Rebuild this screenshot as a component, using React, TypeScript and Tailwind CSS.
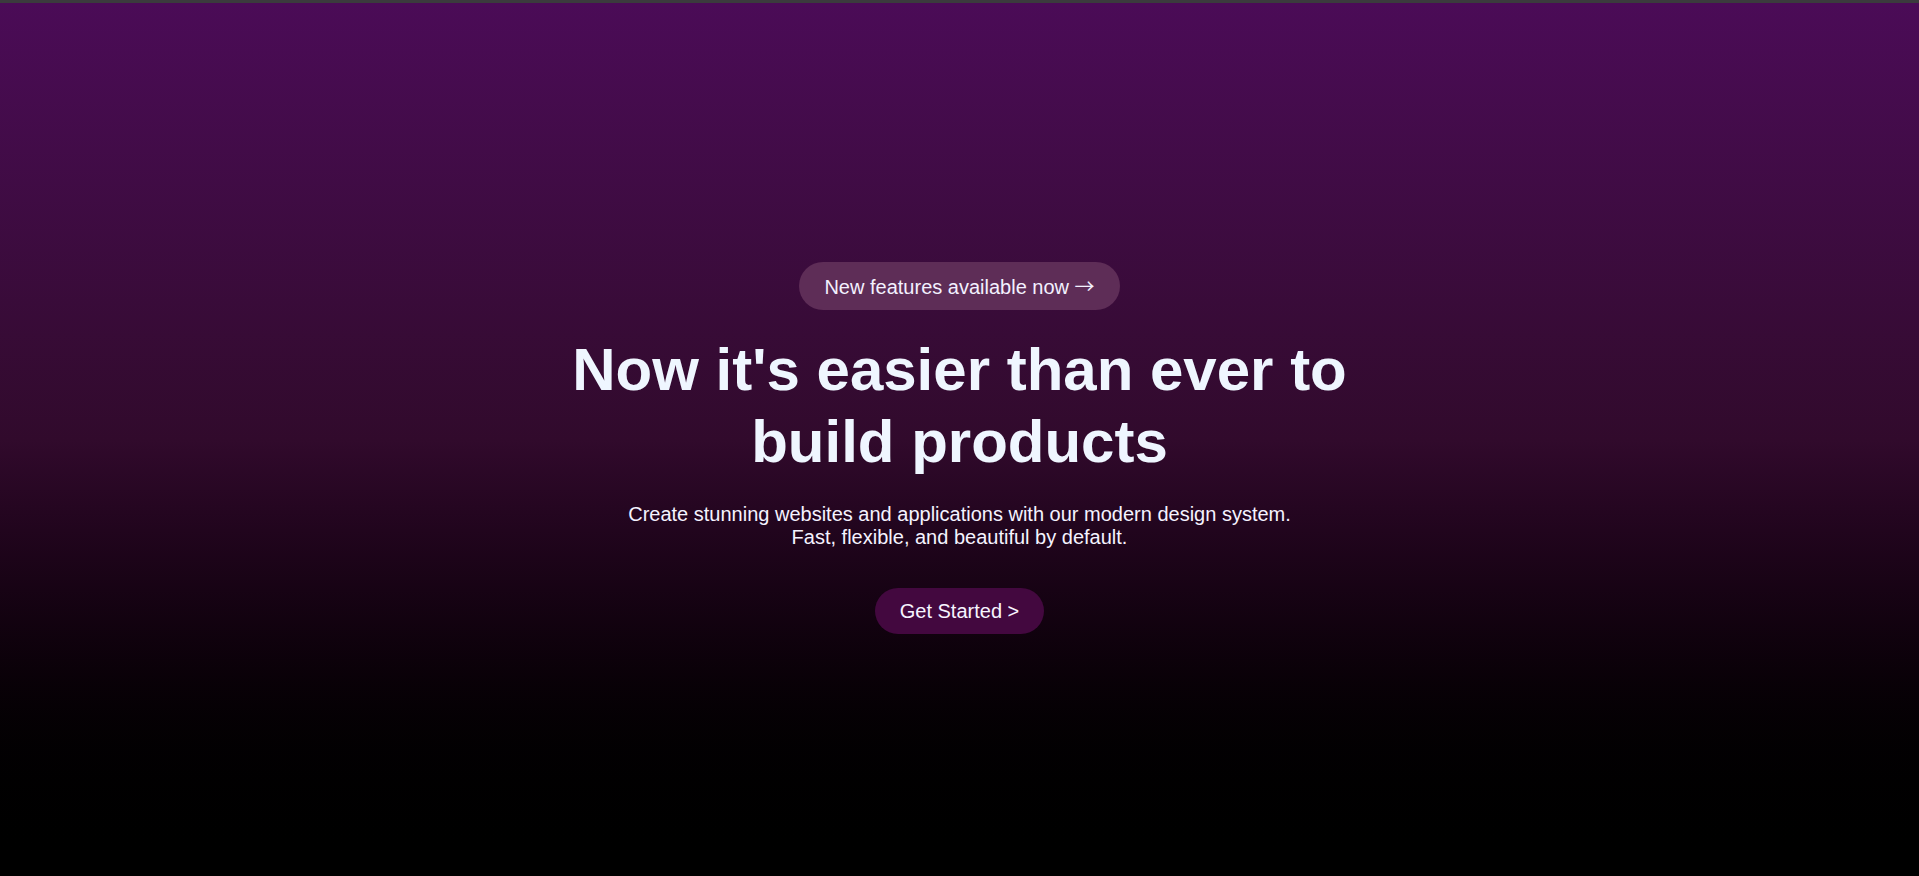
import React from 'react';

const App: React.FC = () => {
  return (
    <div className="min-h-screen w-full bg-black font-['Liberation_Sans',Arial,sans-serif]">
      {/* browser-ish top strip */}
      <div className="h-[3px] w-full bg-[#3b3b3d]"></div>

      <main className="h-[873px] w-full bg-linear-to-b from-[#4b0b57] via-[#310a2c] to-black flex flex-col items-center pt-[259px] text-center">
        <a
          href="#"
          className="h-12 px-[25px] flex items-center rounded-full bg-[#5e2d57] text-[20px] leading-[23px] text-[#f3f1ff] mb-6"
        >
          <span>
            New features available now{' '}
            <span className="font-['Noto_Sans_CJK_SC','DejaVu_Sans',sans-serif] leading-[23px]">→</span>
          </span>
        </a>

        <h1 className="max-w-4xl text-[60px] leading-[72px] font-bold text-[#eff6ff] mb-[25px]">
          Now it's easier than ever to build products
        </h1>

        <p className="text-[20px] leading-[23px] text-[#f5f3ff] mb-[39px]">
          Create stunning websites and applications with our modern design system.
          <br />
          Fast, flexible, and beautiful by default.
        </p>

        <button
          type="button"
          className="h-[46px] px-[25px] rounded-full bg-[#43083f] text-[20px] leading-[23px] text-[#f7f5ff]"
        >
          Get Started &gt;
        </button>
      </main>
    </div>
  );
};

export default App;
